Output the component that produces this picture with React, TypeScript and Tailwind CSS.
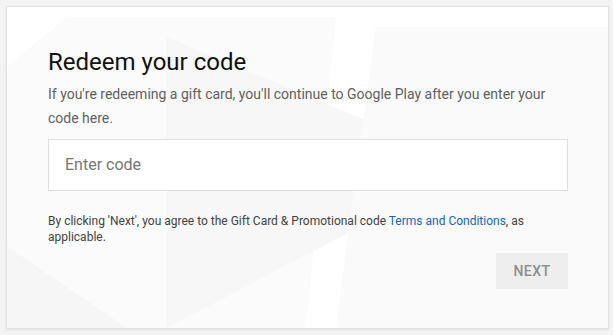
import React from "react";

function Backdrop() {
  return (
    <svg
      className="absolute inset-0 h-full w-full"
      viewBox="0 0 603 322"
      preserveAspectRatio="none"
      aria-hidden="true"
    >
      <polygon points="60,10 330,10 300,322 0,322 0,60" fill="#fbfbfb" />
      <polygon points="160,30 470,160 160,322" fill="#f7f7f7" />
      <polygon points="370,20 603,20 603,322 330,322" fill="#fafafa" />
      <polygon points="0,240 120,322 0,322" fill="#f6f6f6" />
    </svg>
  );
}

export default function App() {
  return (
    <div className="min-h-screen bg-[#f3f3f3] p-[6px] font-['Roboto',sans-serif]">
      <div className="relative h-[323px] w-[603px] overflow-hidden border border-[#e2e2e2] bg-white shadow-[0_1px_2px_rgba(0,0,0,0.08)]">
        <Backdrop />
        <div className="relative flex flex-col pl-[41px] pr-[40px] pt-[40px]">
          <h1 className="text-[24px] leading-[30px] text-[#111111]">Redeem your code</h1>
          <p className="mt-[5px] text-[14px] leading-[24px] text-[#5f5f5f]">
            If you're redeeming a gift card, you'll continue to Google Play after you enter your code here.
          </p>

          <div className="mt-[9px] flex h-[52px] w-[520px] items-center border border-[#dedede] bg-white px-[16px]">
            <span className="text-[16px] text-[#757575]">Enter code</span>
          </div>

          {/* terms, split by line */}
          <div className="mt-[22px] text-[12px] leading-[16px] text-[#424242]">
            <div>
              <span>By clicking 'Next', you agree to the Gift Card &amp; Promotional code </span>
              <a className="text-[#1565c0]">Terms and Conditions</a>
              <span>, as</span>
            </div>
            <div>applicable.</div>
          </div>

          <div className="mt-[8px] flex w-[520px] justify-end">
            <button className="h-[36px] w-[72px] bg-[#eeeeee] text-[14px] font-medium tracking-[0.5px] text-[#8f8f8f]">
              NEXT
            </button>
          </div>
        </div>
      </div>
    </div>
  );
}
